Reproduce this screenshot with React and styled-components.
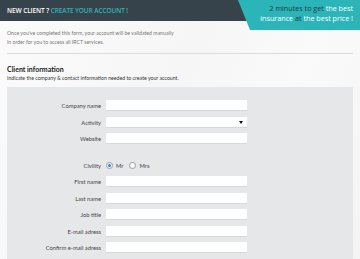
import React from 'react';
import styled, { createGlobalStyle } from 'styled-components';

const GlobalStyle = createGlobalStyle`
  html, body {
    margin: 0;
    padding: 0;
    background: #f9f9f9;
  }
  body {
    font-family: Lato, "Noto Sans", sans-serif;
    color: #555;
  }
`;

const StyledPage = styled.div`
  width: 360px;
  height: 259px;
  overflow: hidden;
  background: linear-gradient(115deg, #fbfbfb 0%, #f6f6f6 45%, #fafafa 70%, #f4f4f4 100%);
`;

const StyledHeader = styled.header`
  position: relative;
  display: flex;
  align-items: center;
  height: 21px;
  padding: 0 7px;
  background: #37434b;
`;

const StyledTitle = styled.h1`
  margin: 0;
  font-family: "Open Sans", sans-serif;
  font-size: 6.5px;
  font-weight: 600;
  letter-spacing: -0.1px;
  color: #fff;
  text-transform: uppercase;
`;

const StyledAccent = styled.span`
  color: ${({ $dark }) => ($dark ? '#24363c' : '#2cb5b9')};
`;

const StyledPromo = styled.div`
  position: absolute;
  top: 0;
  right: 0;
  width: 122px;
  height: 30px;
  box-sizing: border-box;
  padding: 3px 7px 0 0;
  background: #2cb5b9;
  clip-path: polygon(0 0, 100% 0, 100% 100%, 12px 100%);
  text-align: right;
  font-family: "Open Sans", sans-serif;
  font-size: 7.2px;
  line-height: 10px;
  color: #fff;
`;

const StyledIntro = styled.p`
  margin: 0;
  padding: 8px 7px 0;
  font-size: 5.2px;
  line-height: 9px;
  color: #777;
`;

const StyledDivider = styled.hr`
  margin: 6px 7px 0;
  border: 0;
  border-top: 1px solid #dcdcdc;
`;

const StyledSectionTitle = styled.h2`
  margin: 10px 7px 0;
  font-size: 7px;
  line-height: 10px;
  font-weight: 700;
  color: #222;
`;

const StyledHint = styled.p`
  margin: 0 7px;
  font-size: 5.2px;
  line-height: 8px;
  color: #333;
`;

const StyledPanel = styled.form`
  margin: 5px 7px 0;
  padding: 13px 0 20px;
  background: #e6e7e9;
`;

const StyledRow = styled.div`
  display: grid;
  grid-template-columns: 94px 141px;
  column-gap: 5px;
  align-items: center;
  height: 11px;
  margin-top: ${({ $spaced }) => ($spaced ? '15.5px' : '5.5px')};

  &:first-child {
    margin-top: 0;
  }
`;

const StyledLabel = styled.label`
  text-align: right;
  font-size: 5.8px;
  color: #444;
  white-space: nowrap;
`;

const StyledInput = styled.div`
  position: relative;
  height: 11px;
  box-sizing: border-box;
  background: #fff;
  border-bottom: 1px solid #d6d7d9;

  ${({ $select }) =>
    $select &&
    `
    &::after {
      content: '';
      position: absolute;
      right: 4px;
      top: 4px;
      border-left: 2.5px solid transparent;
      border-right: 2.5px solid transparent;
      border-top: 3px solid #111;
    }
  `}
`;

const StyledChoices = styled.div`
  display: flex;
  align-items: center;
  gap: 3px;
  font-size: 5.8px;
  color: #444;
`;

const StyledRadio = styled.span`
  position: relative;
  width: 7px;
  height: 7px;
  box-sizing: border-box;
  border-radius: 50%;
  border: 1px solid #9a9a9a;
  background: #fafafa;
  margin-left: ${({ $first }) => ($first ? '0' : '3px')};

  ${({ $checked }) =>
    $checked &&
    `
    &::after {
      content: '';
      position: absolute;
      inset: 1px;
      border-radius: 50%;
      background: #2f7fcf;
    }
  `}
`;

const companyFields = [
  { label: 'Company name' },
  { label: 'Activity', select: true },
  { label: 'Website' },
];

const contactFields = ['First name', 'Last name', 'Job title', 'E-mail adress', 'Confirm e-mail adress'];

const App = () => (
  <>
    <GlobalStyle />
    <StyledPage>
      <StyledHeader>
        <StyledTitle>
          New client ? <StyledAccent>Create your account !</StyledAccent>
        </StyledTitle>
        <StyledPromo>
          <StyledAccent $dark>2 minutes to get</StyledAccent> the best
          <br />
          insurance <StyledAccent $dark>at</StyledAccent> the best price !
        </StyledPromo>
      </StyledHeader>

      <StyledIntro>
        Once you&apos;ve completed this form, your account will be validated manually
        <br />
        in order for you to access all IRCT services.
      </StyledIntro>
      <StyledDivider />

      <StyledSectionTitle>Client information</StyledSectionTitle>
      <StyledHint>Indicate the company &amp; contact information needed to create your account.</StyledHint>

      <StyledPanel>
        {companyFields.map(({ label, select }) => (
          <StyledRow key={label}>
            <StyledLabel>{label}</StyledLabel>
            <StyledInput $select={select} />
          </StyledRow>
        ))}

        <StyledRow $spaced>
          <StyledLabel>Civility</StyledLabel>
          <StyledChoices>
            <StyledRadio $first $checked />
            Mr
            <StyledRadio />
            Mrs
          </StyledChoices>
        </StyledRow>

        {contactFields.map((label) => (
          <StyledRow key={label}>
            <StyledLabel>{label}</StyledLabel>
            <StyledInput />
          </StyledRow>
        ))}
      </StyledPanel>
    </StyledPage>
  </>
);

export default App;
